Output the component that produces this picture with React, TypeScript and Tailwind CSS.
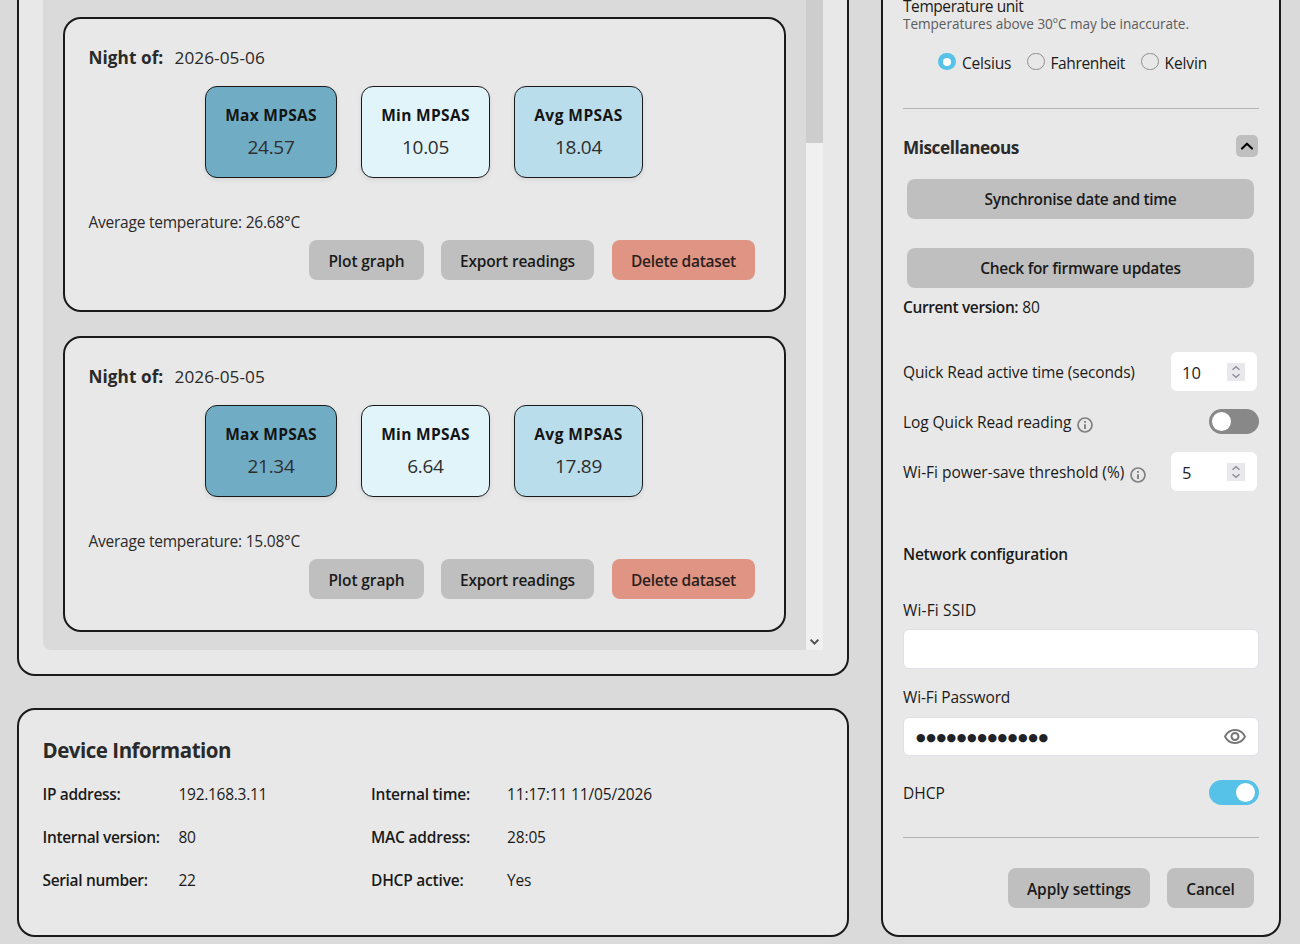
import type { ReactNode } from "react";
import { MdOutlineVisibility } from "react-icons/md";

type Night = {
  date: string;
  max: string;
  min: string;
  avg: string;
  temp: string;
  height: string;
};

const nights: Night[] = [
  { date: "2026-05-06", max: "24.57", min: "10.05", avg: "18.04", temp: "26.68°C", height: "h-[295px]" },
  { date: "2026-05-05", max: "21.34", min: "6.64", avg: "17.89", temp: "15.08°C", height: "h-[296px]" },
];

function Stat({ label, value, className }: { label: string; value: string; className: string }) {
  return (
    <div
      className={`h-[92px] rounded-xl border border-[#1a1a1a] pt-4 text-center shadow-[0_2px_5px_rgba(0,0,0,0.08)] ${className}`}
    >
      <div className="h-6 text-[15.5px] leading-[25px] font-bold text-[#141414]">{label}</div>
      <div className="mt-[5px] text-[19px] leading-[30px] tracking-[-0.3px] text-[#2e2e2e]">{value}</div>
    </div>
  );
}

function Button({ children, className }: { children: ReactNode; className: string }) {
  return (
    <button
      type="button"
      className={`flex h-10 items-center justify-center rounded-lg font-semibold whitespace-nowrap text-[#1a1a1a] ${className}`}
    >
      {children}
    </button>
  );
}

function NightCard({ night }: { night: Night }) {
  return (
    <article
      className={`w-[723px] shrink-0 rounded-[18px] border-2 border-[#1a1a1a] bg-[#e8e8e8] pr-6 pl-[23.5px] pt-[27px] ${night.height}`}
    >
      <div className="flex h-6 items-center text-[17.2px] text-[#2a2a2a]">
        <span className="w-[86px] font-bold tracking-[0.05px]">Night of:</span>
        <span className="tracking-[0.07px]">{night.date}</span>
      </div>
      <div className="mt-4 ml-[116.5px] flex gap-6">
        <Stat label="Max MPSAS" value={night.max} className="w-[132px] bg-[#70adc4] tracking-[0.28px]" />
        <Stat label="Min MPSAS" value={night.min} className="w-[129px] bg-[#e1f4fa] tracking-[0.34px]" />
        <Stat label="Avg MPSAS" value={night.avg} className="w-[129px] bg-[#b9ddeb] tracking-[0.46px]" />
      </div>
      <div className="mt-8 h-6 leading-[25px] tracking-[-0.24px] text-[#2a2a2a]">Average temperature: {night.temp}</div>
      <div className="mt-[6px] mr-[5px] flex justify-end">
        <Button className="mr-[17px] w-[115px] bg-[#bfbfbf] pt-[4px] tracking-[-0.1px]">Plot graph</Button>
        <Button className="mr-[18px] w-[153px] bg-[#bfbfbf] pt-[4px] tracking-[-0.19px]">Export readings</Button>
        <Button className="w-[143px] bg-[#e09484] pt-[4px] tracking-[-0.29px] text-[#2b1f1d]">Delete dataset</Button>
      </div>
    </article>
  );
}

function Radio({ checked = false }: { checked?: boolean }) {
  return checked ? (
    <span className="flex h-[17px] w-[18px] items-center justify-center rounded-full bg-[#56c2e8]">
      <span className="size-2 rounded-full bg-white" />
    </span>
  ) : (
    <span className="h-[17px] w-[17.5px] rounded-full border border-[#8f8f8f]" />
  );
}

function Toggle({ on = false }: { on?: boolean }) {
  return (
    <span
      className={`flex h-[25px] w-[50px] items-center rounded-full ${on ? "justify-end bg-[#56c2e8] pr-1" : "bg-[#888888] pl-[3px]"}`}
    >
      <span className="size-[19px] rounded-full bg-white" />
    </span>
  );
}

function NumberField({ value }: { value: string }) {
  return (
    <div className="mr-[2px] flex h-[39px] w-[86px] items-center justify-between self-start rounded-md bg-white pr-3 pl-[11px]">
      <span className="pt-[2px] text-[16.5px] leading-6 text-[#1f2328]">{value}</span>
      <span className="flex size-[18px] items-center justify-center bg-[#e9e9ed]">
        <svg width="18" height="18" viewBox="0 0 18 18" fill="none" stroke="#8f8f9d" strokeWidth="1.5">
          <path d="M5.5 6.8 9 3.7l3.5 3.1M5.5 11.2 9 14.3l3.5-3.1" />
        </svg>
      </span>
    </div>
  );
}

function Info() {
  return (
    <svg width="16" height="16" viewBox="0 0 16 16" fill="none" stroke="#808080" className="mt-[3px]">
      <circle cx="8" cy="8" r="7" strokeWidth="1.7" />
      <path d="M8 3.9v1.9M8 7.2v4.9" strokeWidth="1.9" />
    </svg>
  );
}

const deviceRows = [
  ["IP address:", "192.168.3.11", "Internal time:", "11:17:11 11/05/2026"],
  ["Internal version:", "80", "MAC address:", "28:05"],
  ["Serial number:", "22", "DHCP active:", "Yes"],
];

export default function App() {
  return (
    <div className="flex h-[944px] w-[1300px] overflow-hidden bg-[#dadada] pl-[17px] font-['Open_Sans','Noto_Sans',sans-serif] text-[15.5px] text-[#1a1a1a]">
      <main className="flex w-[832px] shrink-0 flex-col gap-8">
        <section className="h-[676px] rounded-b-[18px] border-2 border-t-0 border-[#1a1a1a] bg-[#e8e8e8] px-6">
          <div className="flex h-[650px] w-[780px]">
            <div className="flex w-[763px] shrink-0 flex-col gap-6 rounded-bl-lg bg-[#dadada] pt-[17px] pl-5">
              {nights.map((night) => (
                <NightCard key={night.date} night={night} />
              ))}
            </div>
            <div className="flex w-[17px] shrink-0 flex-col justify-between bg-[#f0f0f0]">
              <div className="h-[143px] bg-[#cdcdcd]" />
              <svg width="17" height="17" viewBox="0 0 17 17" fill="none" stroke="#505050" strokeWidth="2">
                <path d="m4.6 6.6 3.9 4 3.9-4" />
              </svg>
            </div>
          </div>
        </section>

        <section className="h-[229px] rounded-[18px] border-2 border-[#1a1a1a] bg-[#e8e8e8] pr-6 pl-[23.5px] pt-[25px]">
          <h2 className="h-[30px] text-[20.5px] leading-[30px] font-bold tracking-[-0.48px] text-[#2a2a2a]">
            Device Information
          </h2>
          <div className="mt-[17px] grid grid-cols-[136px_192.5px_136px_1fr] gap-y-[19px] leading-[25px]">
            {deviceRows.map(([a, b, c, d]) => (
              <div key={a} className="contents">
                <span className="h-6 font-semibold tracking-[-0.34px]">{a}</span>
                <span className="h-6 tracking-[-0.28px]">{b}</span>
                <span className="h-6 font-semibold tracking-[-0.21px]">{c}</span>
                <span className="h-6 tracking-[-0.14px]">{d}</span>
              </div>
            ))}
          </div>
        </section>
      </main>

      <aside className="ml-8 flex h-[937px] w-[400px] shrink-0 flex-col rounded-b-[18px] border-2 border-t-0 border-[#1a1a1a] bg-[#e8e8e8] px-5">
        <div className="-mt-1 h-5 shrink-0 leading-5 tracking-[-0.43px]">Temperature unit</div>
        <div className="h-4 text-[13.6px] leading-4 tracking-[-0.04px] text-[#5c5c5c]">
          Temperatures above 30ºC may be inaccurate.
        </div>
        <div className="mt-[19px] flex h-6 pl-[35px] leading-[25px]">
          <label className="flex w-[89px] gap-[6px] tracking-[-0.2px]">
            <span className="pt-[2px]"><Radio checked /></span>
            Celsius
          </label>
          <label className="flex w-[114px] gap-[6px] tracking-[-0.38px]">
            <span className="flex pt-[2px]"><Radio /></span>
            Fahrenheit
          </label>
          <label className="flex gap-[6px] tracking-[-0.08px]">
            <span className="flex pt-[2px]"><Radio /></span>
            Kelvin
          </label>
        </div>
        <hr className="mt-[33px] border-[#b5b5b5]" />

        <div className="mt-[26px] flex h-6 items-start justify-between">
          <h3 className="text-[17.2px] leading-[26px] font-bold tracking-[-0.46px] text-[#2a2a2a]">Miscellaneous</h3>
          <button
            type="button"
            aria-label="Collapse"
            className="mr-px flex size-[22px] items-center justify-center rounded-[5px] bg-[#bfbfbf]"
          >
            <svg
              width="22"
              height="22"
              viewBox="0 0 22 22"
              fill="none"
              stroke="#000"
              strokeWidth="2.1"
              strokeLinecap="round"
              strokeLinejoin="round"
            >
              <path d="m6 13.6 5-4.9 5 4.9" />
            </svg>
          </button>
        </div>
        <Button className="mt-5 ml-1 w-[347px] shrink-0 bg-[#bfbfbf] pt-[2px] tracking-[-0.3px]">
          Synchronise date and time
        </Button>
        <Button className="mt-[29px] ml-1 w-[347px] shrink-0 bg-[#bfbfbf] pt-[2px] tracking-[-0.31px]">
          Check for firmware updates
        </Button>
        <div className="mt-[7px] h-6 leading-[25px]">
          <span className="font-semibold tracking-[-0.38px]">Current version:</span>{" "}
          <span className="tracking-[-0.24px]">80</span>
        </div>

        <div className="mt-[33px] flex h-10 items-center justify-between">
          <span className="pt-[2px] tracking-[-0.14px]">Quick Read active time (seconds)</span>
          <NumberField value="10" />
        </div>
        <div className="mt-[17px] flex h-[25px] items-center justify-between">
          <span className="flex items-center gap-[6px] pt-[3px] tracking-[-0.09px]">
            Log Quick Read reading
            <Info />
          </span>
          <Toggle />
        </div>
        <div className="mt-[18px] flex h-10 items-center justify-between">
          <span className="flex items-center gap-[6px] pt-[2px] tracking-[-0.03px]">
            Wi-Fi power-save threshold (%)
            <Info />
          </span>
          <NumberField value="5" />
        </div>

        <h4 className="mt-[50px] h-6 leading-[25px] font-semibold tracking-[-0.23px]">Network configuration</h4>
        <div className="mt-8 h-6 leading-[25px] tracking-[0.16px]">Wi-Fi SSID</div>
        <div className="mt-[7px] h-10 rounded-md border border-[#dfe1e8] bg-white" />
        <div className="mt-4 h-6 leading-[25px] tracking-[-0.13px]">Wi-Fi Password</div>
        <div className="mt-2 flex h-[39px] items-center justify-between rounded-md border border-[#dfe1e8] bg-white pr-[11px] pl-3">
          <span className="pt-[2px] font-['DejaVu_Sans',sans-serif] text-[11px] leading-5 tracking-[0.6px] text-[#1f2328]">
            ●●●●●●●●●●●●●
          </span>
          <MdOutlineVisibility size={24} color="#757575" />
        </div>
        <div className="mt-6 flex h-[25px] items-center justify-between">
          <span className="pt-[3px]">DHCP</span>
          <Toggle on />
        </div>
        <hr className="mt-8 border-[#b5b5b5]" />
        <div className="mt-[30px] mr-[5px] flex justify-end gap-[17px]">
          <Button className="w-[142px] bg-[#bfbfbf] pt-[4px] tracking-[-0.08px]">Apply settings</Button>
          <Button className="w-[87px] bg-[#bfbfbf] pt-[4px] tracking-[-0.22px]">Cancel</Button>
        </div>
      </aside>
    </div>
  );
}
